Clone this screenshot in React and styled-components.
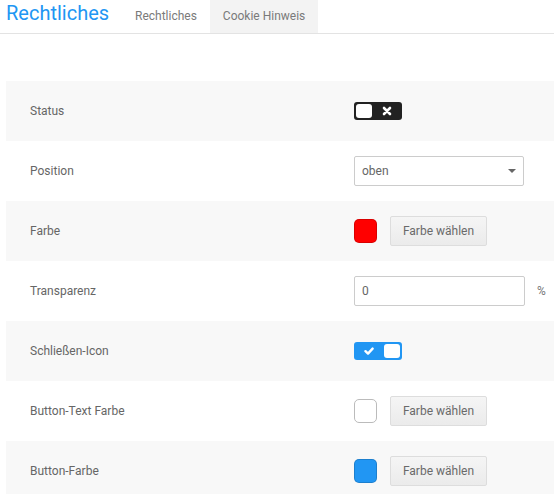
import React from 'react';
import styled, { createGlobalStyle } from 'styled-components';

const GlobalStyle = createGlobalStyle`
  html, body {
    margin: 0;
    padding: 0;
    background: #fff;
    font-family: Roboto, 'Liberation Sans', sans-serif;
  }
`;

const Header = styled.div`
  display: flex;
  align-items: stretch;
  height: 33px;
  border-bottom: 1px solid #e3e3e3;
`;

const Title = styled.h1`
  margin: 0;
  padding: 0 0 0 6px;
  width: 116px;
  font-size: 20px;
  font-weight: 400;
  line-height: 26px;
  color: #2196f3;
`;

const Tab = styled.div`
  display: flex;
  align-items: center;
  padding: 0 13px 2px;
  font-size: 12px;
  color: #7a7a7a;
  background: ${(p) => (p.active ? '#f3f3f3' : 'transparent')};
`;

const Rows = styled.div`
  margin: 47px 0 0 6px;
`;

const Row = styled.div`
  display: grid;
  grid-template-columns: 348px 1fr;
  align-items: center;
  height: 60px;
  background: ${(p) => (p.shaded ? '#f8f8f8' : '#fff')};
`;

const Label = styled.div`
  padding-left: 24px;
  font-size: 12px;
  color: #666;
`;

const Control = styled.div`
  display: flex;
  align-items: center;
`;

const Toggle = styled.div`
  box-sizing: border-box;
  display: flex;
  align-items: center;
  justify-content: space-between;
  width: 48px;
  height: 18px;
  padding: 2px;
  border-radius: 3px;
  background: ${(p) => (p.on ? '#2196f3' : '#222')};
`;

const Knob = styled.div`
  width: 16px;
  height: 14px;
  border-radius: 3px;
  background: #fff;
`;

const ToggleIcon = styled.svg`
  width: 10px;
  height: 10px;
  margin: 0 8px;
`;

const Select = styled.div`
  box-sizing: border-box;
  position: relative;
  width: 170px;
  height: 30px;
  padding: 0 7px;
  display: flex;
  align-items: center;
  border: 1px solid #ccc;
  border-radius: 2px;
  font-size: 12px;
  color: #666;
  background: #fff;
`;

const Caret = styled.span`
  position: absolute;
  right: 7px;
  top: 12px;
  width: 0;
  height: 0;
  border-left: 4px solid transparent;
  border-right: 4px solid transparent;
  border-top: 4px solid #666;
`;

const Swatch = styled.div`
  box-sizing: border-box;
  width: 23px;
  height: 24px;
  border-radius: 5px;
  background: ${(p) => p.color};
  border: 1px solid ${(p) => (p.color === '#fff' ? '#bbb' : 'rgba(0,0,0,0.15)')};
`;

const PickButton = styled.button`
  box-sizing: border-box;
  margin-left: 13px;
  width: 97px;
  height: 30px;
  border: 1px solid #ddd;
  border-radius: 2px;
  background: linear-gradient(#f5f5f5, #ebebeb);
  font-family: Roboto, 'Liberation Sans', sans-serif;
  font-size: 12px;
  color: #6a6a6a;
  padding: 0;
`;

const Input = styled.input`
  box-sizing: border-box;
  width: 171px;
  height: 30px;
  padding: 0 7px;
  border: 1px solid #ccc;
  border-radius: 2px;
  font-family: Roboto, 'Liberation Sans', sans-serif;
  font-size: 12px;
  color: #666;
  outline: none;
`;

const Unit = styled.span`
  margin-left: 12px;
  font-size: 12px;
  color: #777;
`;

const CrossIcon = () => (
  <ToggleIcon viewBox="0 0 10 10">
    <path d="M2 2 L8 8 M8 2 L2 8" stroke="#fff" strokeWidth="2.6" strokeLinecap="round" />
  </ToggleIcon>
);

const CheckIcon = () => (
  <ToggleIcon viewBox="0 0 10 10">
    <path d="M1.5 5.2 L4 7.6 L8.6 2.6" stroke="#fff" strokeWidth="2.4" fill="none" strokeLinecap="round" strokeLinejoin="round" />
  </ToggleIcon>
);

const ColorPick = ({ color }) => (
  <Control>
    <Swatch color={color} />
    <PickButton>Farbe wählen</PickButton>
  </Control>
);

export default function App() {
  return (
    <>
      <GlobalStyle />
      <Header>
        <Title>Rechtliches</Title>
        <Tab>Rechtliches</Tab>
        <Tab active>Cookie Hinweis</Tab>
      </Header>
      <Rows>
        <Row shaded>
          <Label>Status</Label>
          <Control>
            <Toggle>
              <Knob />
              <CrossIcon />
            </Toggle>
          </Control>
        </Row>
        <Row>
          <Label>Position</Label>
          <Control>
            <Select>
              oben
              <Caret />
            </Select>
          </Control>
        </Row>
        <Row shaded>
          <Label>Farbe</Label>
          <ColorPick color="#ff0000" />
        </Row>
        <Row>
          <Label>Transparenz</Label>
          <Control>
            <Input defaultValue="0" />
            <Unit>%</Unit>
          </Control>
        </Row>
        <Row shaded>
          <Label>Schließen-Icon</Label>
          <Control>
            <Toggle on>
              <CheckIcon />
              <Knob />
            </Toggle>
          </Control>
        </Row>
        <Row>
          <Label>Button-Text Farbe</Label>
          <ColorPick color="#fff" />
        </Row>
        <Row shaded>
          <Label>Button-Farbe</Label>
          <ColorPick color="#2196f3" />
        </Row>
      </Rows>
    </>
  );
}
